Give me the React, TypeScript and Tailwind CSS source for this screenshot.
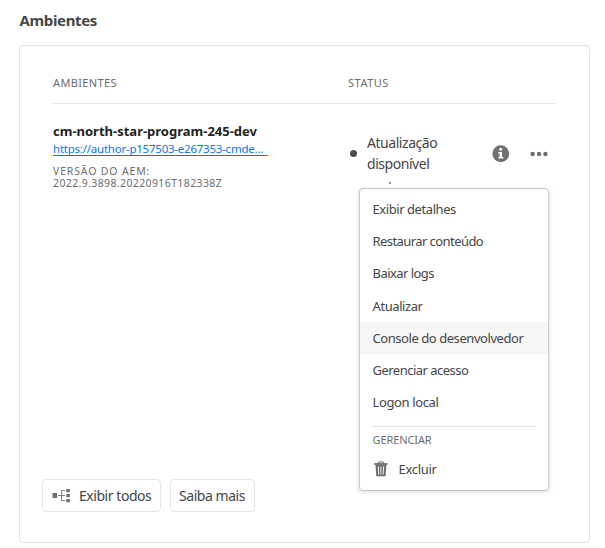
import React from 'react';

const actions = [
  { label: 'Exibir detalhes', cls: 'tracking-[-0.43px]' },
  { label: 'Restaurar conteúdo', cls: 'tracking-[-0.57px]' },
  { label: 'Baixar logs', cls: 'tracking-[-0.55px]' },
  { label: 'Atualizar', cls: 'tracking-[-0.42px]' },
  { label: 'Console do desenvolvedor', cls: 'tracking-[-0.44px] bg-[#f6f6f6]' },
  { label: 'Gerenciar acesso', cls: 'tracking-[-0.52px]' },
  { label: 'Logon local', cls: 'tracking-[-0.38px]' },
];

function InfoIcon() {
  return (
    <svg width="18" height="18" viewBox="0 0 18 18" className="shrink-0">
      <circle cx="8.8" cy="8.7" r="8.4" fill="#707070" />
      <circle cx="8.7" cy="4.3" r="1.5" fill="#fff" />
      <path d="M6.2 6.9h3.9v5h1.3v1.7H6.2v-1.7h1.3V8.6H6.2z" fill="#fff" />
    </svg>
  );
}

function MoreIcon() {
  return (
    <svg width="18" height="6" viewBox="0 0 18 6" fill="#6e6e6e" className="shrink-0">
      <circle cx="2.6" cy="3" r="2.2" />
      <circle cx="9" cy="3" r="2.2" />
      <circle cx="15.4" cy="3" r="2.2" />
    </svg>
  );
}

function TreeIcon() {
  return (
    <svg width="18" height="14" viewBox="0 0 18 14" className="shrink-0">
      <g fill="#6e6e6e">
        <rect x="0.5" y="4" width="4.6" height="5" />
        <rect x="14.3" y="0" width="3.5" height="3.2" />
        <rect x="14.3" y="5" width="3.5" height="3.2" />
        <rect x="14.3" y="10" width="3.5" height="3.2" />
      </g>
      <path d="M6 6.5h7M13 1.5H9.5v10H13" fill="none" stroke="#808080" />
    </svg>
  );
}

function TrashIcon() {
  return (
    <svg width="14" height="16" viewBox="0 0 14 16" className="shrink-0">
      <path d="M4.3 2.2V1h5.2v1.2" fill="none" stroke="#6e6e6e" />
      <path d="M.3 2.1h13.2v1.8H.3z" fill="#6e6e6e" />
      <path d="M1.5 3.8h10.9l-.8 11.5H2.3z" fill="#6e6e6e" />
      <path d="M4.3 5.4l.4 8.2M6.95 5.4v8.2M9.6 5.4l-.4 8.2" stroke="#fff" strokeWidth=".9" />
    </svg>
  );
}

function ActionMenu() {
  return (
    <div className="absolute left-[359px] top-[188px] h-[303px] w-[190px] rounded-[4px] border border-[#cacaca] bg-white pt-1 shadow-[0_1px_4px_rgba(0,0,0,0.15)]">
      {actions.map((a) => (
        <div key={a.label} className={`h-[32.2px] whitespace-nowrap pl-[12.5px] text-[13px] leading-[32px] ${a.cls}`}>
          {a.label}
        </div>
      ))}
      <div className="ml-3 mr-3 mt-[8px] border-t border-[#e1e1e1]" />
      <div className="mt-[5px] pl-[12.5px] text-[11px] leading-4 tracking-[-0.1px] text-[#6e6e6e]">GERENCIAR</div>
      <div className="mt-[5px] flex h-8 items-center gap-[11px] pl-[13.5px] text-[13px] tracking-[-0.3px]">
        <TrashIcon />
        <span>Excluir</span>
      </div>
    </div>
  );
}

export default function App() {
  return (
    <div className="relative h-[548px] w-[605px] overflow-hidden bg-white font-['Noto_Sans',sans-serif] text-[#464646]">
      <h1 className="h-[45px] pl-[19.5px] pt-[10px] text-[15px] font-bold leading-5 tracking-[-0.35px]">Ambientes</h1>
      <section className="ml-[19px] flex h-[498px] w-[571px] flex-col rounded-[4px] border border-[#e4e4e4] pl-[33px] pr-[33px]">
        <div className="flex h-[58px] items-center border-b border-[#e6e6e6] pt-[17px] text-[11px] text-[#6e6e6e]">
          <span className="w-[295px] tracking-[0.35px]">AMBIENTES</span>
          <span className="tracking-[0.5px]">STATUS</span>
        </div>
        <div className="flex h-[84px]">
          <div className="w-[295px] whitespace-nowrap pt-[18px]">
            <div className="text-[13px] font-bold leading-[18px] text-[#222]">cm-north-star-program-245-dev</div>
            <div className="h-4 w-[215px] border-b border-[#1473e6] text-[11.5px] leading-[18px] tracking-[-0.23px] text-[#1473e6]">https://author-p157503-e267353-cmde...</div>
            <div className="mt-[9px] text-[10.5px] leading-[12px] text-[#6e6e6e]">
              <div className="tracking-[0.85px]">VERSÃO DO AEM:</div>
              <div className="tracking-[0.38px]">2022.9.3898.20220916T182338Z</div>
            </div>
          </div>
          <div className="flex h-full flex-1 pl-[2px] pt-[28px]">
            <span className="mt-[18px] h-[7px] w-[7px] shrink-0 rounded-full bg-[#4b4b4b]" />
            <div className="ml-[10px] h-[53px] w-[125px] overflow-hidden text-[14px] leading-[21px] tracking-[-0.45px]">
              <div>Atualização</div>
              <div>disponível</div>
              <div className="ml-[22px] mt-[8px] h-[2px] w-[2px] bg-[#7d93bd]" />
            </div>
            <div className="mt-[13px] flex h-[18px] items-center gap-5">
              <InfoIcon />
              <MoreIcon />
            </div>
          </div>
        </div>
        <div className="-ml-[11px] mb-[30px] mt-auto flex gap-[9px] text-[14px]">
          <button className="flex h-[33px] w-[119px] items-center rounded-[4px] border border-[#e6e6e6] pl-[9px]">
            <TreeIcon />
            <span className="ml-[9px] whitespace-nowrap tracking-[-0.45px]">Exibir todos</span>
          </button>
          <button className="h-[33px] w-[85px] whitespace-nowrap rounded-[4px] border border-[#e6e6e6] pl-[8px] text-left tracking-[-0.45px]">Saiba mais</button>
        </div>
      </section>
      <ActionMenu />
    </div>
  );
}
